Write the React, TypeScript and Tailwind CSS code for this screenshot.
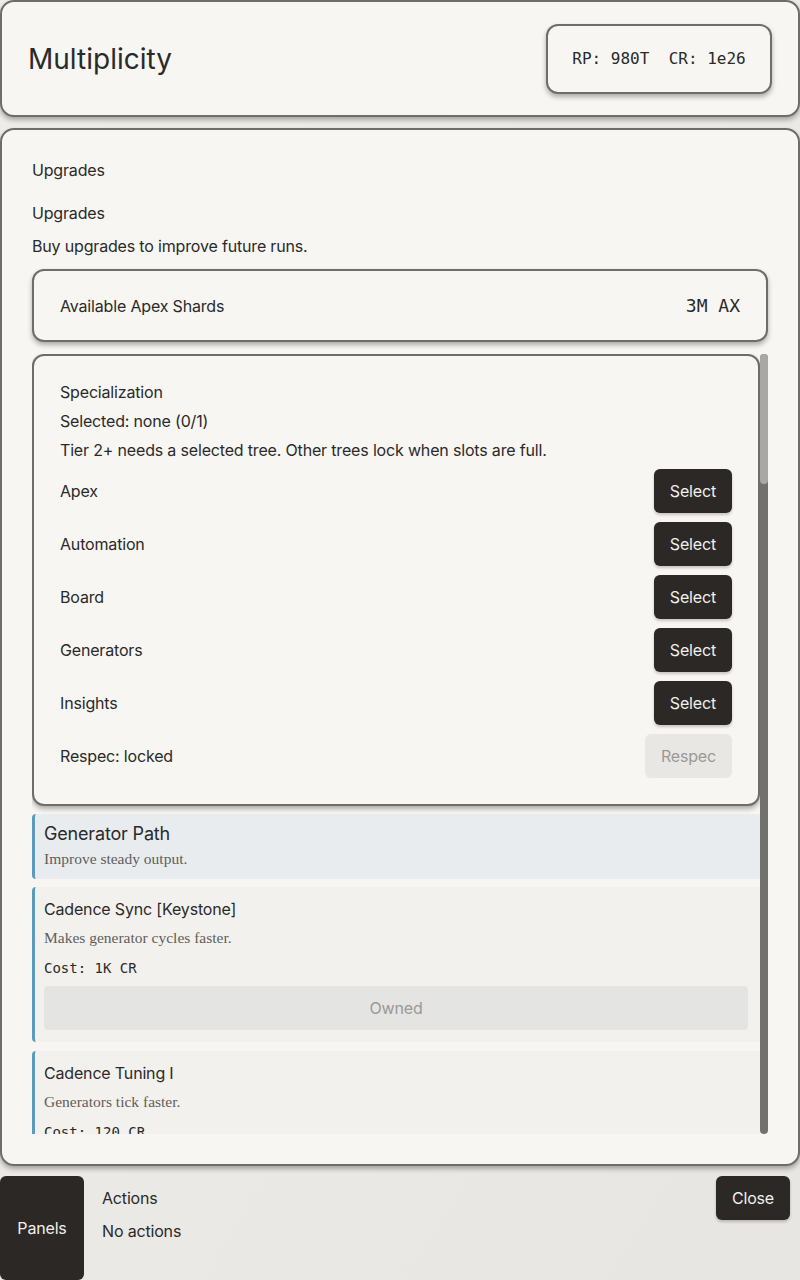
import React from "react";

const sans = "font-['Inter','Noto_Sans',sans-serif]";
const serif = "font-['Liberation_Serif','DejaVu_Serif',serif]";
const mono = "font-['DejaVu_Sans_Mono','Liberation_Mono',monospace]";

type Item = { title: string; desc: string; cost: string; owned?: boolean };
type Path = { name: string; desc: string; items: Item[] };

const paths: Path[] = [
  {
    name: "Generator Path",
    desc: "Improve steady output.",
    items: [
      { title: "Cadence Sync [Keystone]", desc: "Makes generator cycles faster.", cost: "1K CR", owned: true },
      { title: "Cadence Tuning I", desc: "Generators tick faster.", cost: "120 CR" },
      { title: "Cadence Tuning II", desc: "Generators tick faster.", cost: "1.2K CR" },
      { title: "Output Boost I", desc: "Generators produce more.", cost: "300 CR" },
    ],
  },
];

const trees = ["Apex", "Automation", "Board", "Generators", "Insights"];

function DarkButton({ children }: { children: React.ReactNode }) {
  return (
    <button className="h-[44px] px-4 rounded-[6px] bg-[#2b2826] text-[#f1f0ec] text-[16px] leading-5 shadow-[0_2px_3px_rgba(0,0,0,0.2)]">
      {children}
    </button>
  );
}

function UpgradeCard({ item }: { item: Item }) {
  return (
    <div className="flex flex-col rounded-l-[4px] border-l-[3px] border-[#5b9abb] bg-[#f2f1ed] pl-[9px] pr-[12px] pt-[12px] pb-[12px]">
      <div className="text-[16px] leading-5 text-[#2a2a2a]">{item.title}</div>
      <div className={`${serif} mt-[9px] text-[15.5px] leading-5 text-[#5f5e5a] tracking-normal`}>{item.desc}</div>
      <div className={`${mono} mt-[10px] text-[14px] leading-5 text-[#2a2a2a] tracking-normal`}>Cost: {item.cost}</div>
      <button
        className={`mt-[8px] h-[44px] w-full rounded-[4px] text-[16px] ${
          item.owned ? "bg-[#e4e4e2] text-[#9a9996]" : "bg-[#2b2826] text-[#f1f0ec]"
        }`}
      >
        {item.owned ? "Owned" : "Buy"}
      </button>
    </div>
  );
}

export default function App() {
  return (
    <div className={`${sans} h-[1280px] w-[800px] flex flex-col bg-gradient-to-br from-[#eeede9] to-[#e7e6e2] text-[#2a2a2a] overflow-hidden tracking-[-0.17px]`}>
      {/* Header */}
      <div className="h-[117px] shrink-0 flex items-center justify-between rounded-[14px] border-2 border-[#6e6d69] bg-[#f7f6f2] pl-[26px] pr-[26px] shadow-[0_3px_5px_rgba(0,0,0,0.3)]">
        <h1 className="text-[28px] leading-8 text-[#2a2a2a] tracking-normal">Multiplicity</h1>
        <div className={`${mono} h-[70px] w-[226px] flex items-center justify-center rounded-[12px] border-2 border-[#6e6d69] bg-[#f7f6f2] text-[16px] text-[#2a2a2a] shadow-[0_3px_5px_rgba(0,0,0,0.3)] whitespace-pre tracking-normal`}>
          RP: 980T  CR: 1e26
        </div>
      </div>

      {/* Main */}
      <div className="mt-[11px] h-[1038px] shrink-0 flex flex-col rounded-[14px] border-2 border-[#6e6d69] bg-[#f7f6f2] px-[30px] pt-[30px] pb-[30px] shadow-[0_3px_5px_rgba(0,0,0,0.3)]">
        <div className="text-[16px] leading-5">Upgrades</div>
        <div className="mt-[23px] text-[16px] leading-5">Upgrades</div>
        <div className="mt-[13px] text-[16px] leading-5">Buy upgrades to improve future runs.</div>
        <div className="mt-[13px] h-[73px] shrink-0 flex items-center justify-between rounded-[12px] border-2 border-[#6e6d69] bg-[#f7f6f2] px-[26px] shadow-[0_3px_5px_rgba(0,0,0,0.3)]">
          <span className="text-[16px]">Available Apex Shards</span>
          <span className={`${mono} text-[18px] tracking-normal`}>3M AX</span>
        </div>

        <div className="mt-[12px] flex-1 min-h-0 flex">
          <div className="flex-1 min-w-0 overflow-hidden">
            <div className="flex flex-col gap-[8px] pb-2">
              {/* Specialization */}
              <div className="flex flex-col gap-[9px] rounded-[12px] border-2 border-[#6e6d69] bg-[#f7f6f2] p-[26px] shadow-[0_3px_5px_rgba(0,0,0,0.3)]">
                <div className="text-[16px] leading-5">Specialization</div>
                <div className="text-[16px] leading-5">Selected: none (0/1)</div>
                <div className="text-[16px] leading-5">Tier 2+ needs a selected tree. Other trees lock when slots are full.</div>
                {trees.map((t) => (
                  <div key={t} className="flex items-center justify-between">
                    <span className="text-[16px]">{t}</span>
                    <DarkButton>Select</DarkButton>
                  </div>
                ))}
                <div className="flex items-center justify-between">
                  <span className="text-[16px]">Respec: locked</span>
                  <button className="h-[44px] px-[16px] rounded-[6px] bg-[#e8e7e3] text-[#9a9996] text-[16px]">Respec</button>
                </div>
              </div>

              {paths.map((p) => (
                <div key={p.name} className="flex flex-col">
                  <div className="mb-[8px] flex flex-col rounded-l-[4px] border-l-[3px] border-[#5b9abb] bg-[#e8ecef] pl-[9px] pt-[9px] pb-[10px]">
                    <div className="text-[18px] leading-[22px] text-[#2a2a2a]">{p.name}</div>
                    <div className={`${serif} mt-[4px] text-[15.5px] leading-5 text-[#5f5e5a] tracking-normal`}>{p.desc}</div>
                  </div>
                  <div className="flex flex-col gap-[9px]">
                    {p.items.map((it) => (
                      <UpgradeCard key={it.title} item={it} />
                    ))}
                  </div>
                </div>
              ))}
            </div>
          </div>
          {/* scrollbar */}
          <div className="w-[8px] shrink-0 flex flex-col rounded-[4px] bg-[#72716d]">
            <div className="h-[130px] rounded-[4px] bg-[#a9a8a4]" />
          </div>
        </div>
      </div>

      {/* Footer */}
      <div className="mt-[10px] flex-1 flex items-start">
        <button className="h-[104px] w-[84px] shrink-0 rounded-[6px] bg-[#2b2826] text-[#f1f0ec] text-[16px]">Panels</button>
        <div className="ml-[18px] flex-1 flex flex-col">
          <div className="mt-[12px] text-[16px] leading-5">Actions</div>
          <div className="mt-[13px] text-[16px] leading-5">No actions</div>
        </div>
        <button className="mr-[10px] h-[44px] px-4 rounded-[6px] bg-[#2b2826] text-[#f1f0ec] text-[16px] shadow-[0_2px_3px_rgba(0,0,0,0.2)]">Close</button>
      </div>
    </div>
  );
}
